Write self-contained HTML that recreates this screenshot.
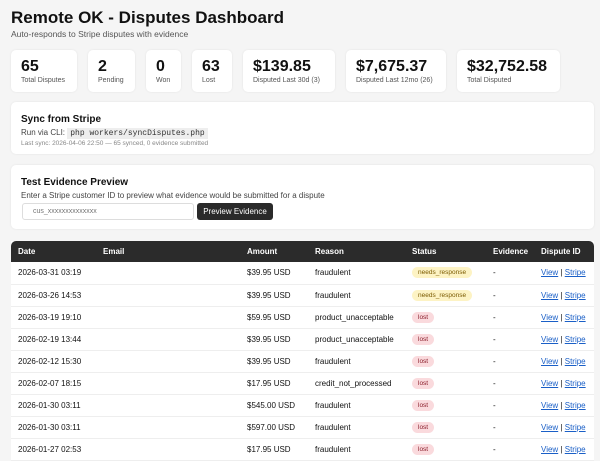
<!DOCTYPE html>
<html><head><style>
*{box-sizing:border-box;margin:0;padding:0}
body{width:600px;height:458px;overflow:hidden;background:#f5f5f5;font-family:"Liberation Sans",sans-serif;color:#111;}
h1{font-size:17px;font-weight:bold;position:absolute;left:11px;top:8px;}
.sub{position:absolute;left:11px;top:29px;font-size:8.5px;color:#555}
.stats{position:absolute;left:11px;top:50px;display:flex;gap:11px}
.c{background:#fff;border-radius:5px;box-shadow:0 0 2px rgba(0,0,0,.08);height:42px;padding:8px 10px 0 10px;white-space:nowrap}
.c b{display:block;font-size:16px;line-height:18px}
.c span{display:block;font-size:7px;color:#555;line-height:9px}
.box{position:absolute;left:11px;width:583px;background:#fff;border-radius:5px;box-shadow:0 0 2px rgba(0,0,0,.08);padding:0 10px}
.box h3{font-size:10px;margin-top:12px}
.box p{font-size:8px;color:#444;margin-top:3px}
code{font-family:"Liberation Mono",monospace;background:#eee;padding:1px 3px;font-size:8px;color:#333}
.sm{font-size:6.5px!important;color:#888!important;margin-top:2px!important}
input{position:absolute;left:11px;top:38px;width:172px;height:17px;border:1px solid #ddd;border-radius:3px;font-size:7px;padding-left:10px;color:#777;font-family:"Liberation Sans",sans-serif}
.btn{position:absolute;left:186px;top:38px;width:76px;height:17px;background:#2a2a2a;color:#fff;border-radius:3px;font-size:8px;text-align:center;line-height:17px}
table{position:absolute;left:11px;top:241px;width:583px;border-collapse:collapse;background:#fff;font-size:8px}
th{background:#2b2b2b;color:#fff;text-align:left;font-weight:bold;height:21px;padding:0 0 0 7px}
th:first-child{border-top-left-radius:5px}th:last-child{border-top-right-radius:5px}
td{height:22px;border-bottom:1px solid #eee;padding:0 0 0 7px}
.p{display:inline-block;font-size:6.5px;border-radius:7px;padding:2px 6px}
.n{background:#fdf3c4;color:#7a5a00}.l{background:#fadadd;color:#8a1d2a}
a{color:#1a5fc7;text-decoration:underline}
</style></head><body>
<h1>Remote OK - Disputes Dashboard</h1>
<div class="sub">Auto-responds to Stripe disputes with evidence</div>
<div class="stats">
<div class="c" style="width:66px"><b>65</b><span>Total Disputes</span></div>
<div class="c" style="width:47px"><b>2</b><span>Pending</span></div>
<div class="c" style="width:35px"><b>0</b><span>Won</span></div>
<div class="c" style="width:40px"><b>63</b><span>Lost</span></div>
<div class="c" style="width:92px"><b>$139.85</b><span>Disputed Last 30d (3)</span></div>
<div class="c" style="width:100px"><b>$7,675.37</b><span>Disputed Last 12mo (26)</span></div>
<div class="c" style="width:103px"><b>$32,752.58</b><span>Total Disputed</span></div>
</div>
<div class="box" style="top:102px;height:52px"><h3>Sync from Stripe</h3><p>Run via CLI: <code>php workers/syncDisputes.php</code></p><p class="sm">Last sync: 2026-04-06 22:50 — 65 synced, 0 evidence submitted</p></div>
<div class="box" style="top:165px;height:64px"><h3>Test Evidence Preview</h3><p>Enter a Stripe customer ID to preview what evidence would be submitted for a dispute</p><input value="cus_xxxxxxxxxxxxxx"><div class="btn">Preview Evidence</div></div>
<table>
<tr><th style="width:85px">Date</th><th style="width:144px">Email</th><th style="width:68px">Amount</th><th style="width:97px">Reason</th><th style="width:81px">Status</th><th style="width:48px">Evidence</th><th>Dispute ID</th></tr>
<tr><td>2026-03-31 03:19</td><td></td><td>$39.95 USD</td><td>fraudulent</td><td><span class="p n">needs_response</span></td><td>-</td><td><a>View</a> | <a>Stripe</a></td></tr>
<tr><td>2026-03-26 14:53</td><td></td><td>$39.95 USD</td><td>fraudulent</td><td><span class="p n">needs_response</span></td><td>-</td><td><a>View</a> | <a>Stripe</a></td></tr>
<tr><td>2026-03-19 19:10</td><td></td><td>$59.95 USD</td><td>product_unacceptable</td><td><span class="p l">lost</span></td><td>-</td><td><a>View</a> | <a>Stripe</a></td></tr>
<tr><td>2026-02-19 13:44</td><td></td><td>$39.95 USD</td><td>product_unacceptable</td><td><span class="p l">lost</span></td><td>-</td><td><a>View</a> | <a>Stripe</a></td></tr>
<tr><td>2026-02-12 15:30</td><td></td><td>$39.95 USD</td><td>fraudulent</td><td><span class="p l">lost</span></td><td>-</td><td><a>View</a> | <a>Stripe</a></td></tr>
<tr><td>2026-02-07 18:15</td><td></td><td>$17.95 USD</td><td>credit_not_processed</td><td><span class="p l">lost</span></td><td>-</td><td><a>View</a> | <a>Stripe</a></td></tr>
<tr><td>2026-01-30 03:11</td><td></td><td>$545.00 USD</td><td>fraudulent</td><td><span class="p l">lost</span></td><td>-</td><td><a>View</a> | <a>Stripe</a></td></tr>
<tr><td>2026-01-30 03:11</td><td></td><td>$597.00 USD</td><td>fraudulent</td><td><span class="p l">lost</span></td><td>-</td><td><a>View</a> | <a>Stripe</a></td></tr>
<tr><td>2026-01-27 02:53</td><td></td><td>$17.95 USD</td><td>fraudulent</td><td><span class="p l">lost</span></td><td>-</td><td><a>View</a> | <a>Stripe</a></td></tr>
</table>
</body></html>
